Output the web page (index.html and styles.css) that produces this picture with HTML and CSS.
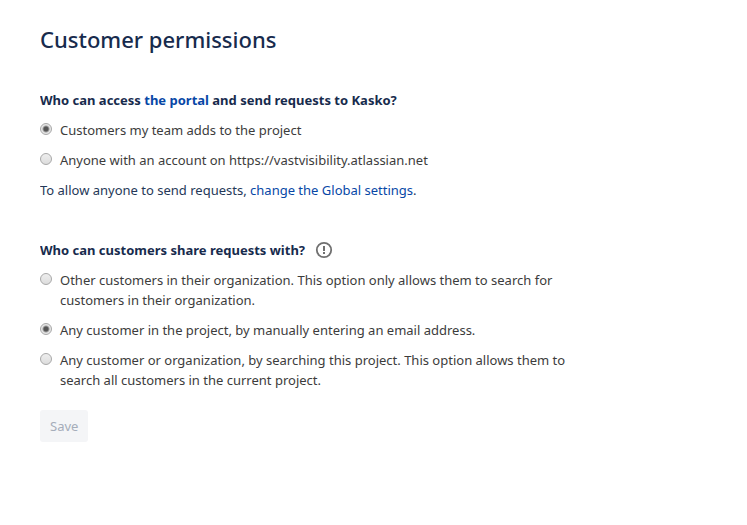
FILE: index.html
```html
<!DOCTYPE html>
<html lang="en">
<head>
    <meta charset="UTF-8">
    <meta name="viewport" content="width=device-width, initial-scale=1.0">
    <title>Customer permissions</title>
    <link rel="stylesheet" href="styles.css">
</head>
<body>

<h1>Customer permissions</h1>

<form>
    <fieldset>
        <legend>Who can access <a href="#">the portal</a> and send requests to Kasko?</legend>
        <div class="option">
            <input type="radio" name="access" id="access-team" checked>
            <label for="access-team">Customers my team adds to the project</label>
        </div>
        <div class="option">
            <input type="radio" name="access" id="access-anyone">
            <label for="access-anyone">Anyone with an account on https://vastvisibility.atlassian.net</label>
        </div>
        <p>To allow anyone to send requests, <a href="#">change the Global settings</a>.</p>
    </fieldset>

    <fieldset>
        <legend class="with-icon">
            Who can customers share requests with?
            <svg viewBox="0 0 18 18" width="18" height="18" aria-hidden="true">
                <circle cx="9" cy="9" r="7.2" fill="none" stroke="#707070" stroke-width="1.8"/>
                <rect x="8" y="5" width="2" height="5" fill="#707070"/>
                <rect x="8" y="11" width="2" height="2" fill="#707070"/>
            </svg>
        </legend>
        <div class="option">
            <input type="radio" name="share" id="share-org">
            <label for="share-org">Other customers in their organization. This option only allows them to search for customers in their organization.</label>
        </div>
        <div class="option">
            <input type="radio" name="share" id="share-email" checked>
            <label for="share-email">Any customer in the project, by manually entering an email address.</label>
        </div>
        <div class="option">
            <input type="radio" name="share" id="share-any">
            <label for="share-any">Any customer or organization, by searching this project. This option allows them to search all customers in the current project.</label>
        </div>
    </fieldset>

    <button type="button" disabled>Save</button>
</form>

</body>
</html>
```
FILE: styles.css
```css
body {
    font-family: "Noto Sans", "Open Sans", sans-serif;
    font-size: 13px;
    line-height: 20px;
    margin: 24px 40px;
    color: #3c3c3c;
    background-color: #fff;
}

h1 {
    margin: 0 0 36px;
    font-size: 22px;
    font-weight: 500;
    line-height: 30px;
    color: #172b4d;
}

form {
    max-width: 540px;
}

fieldset {
    margin: 0 0 40px;
    padding: 0;
    border: none;
}

fieldset:last-of-type {
    margin-bottom: 20px;
}

legend {
    padding: 0;
    font-weight: 700;
    color: #172b4d;
}

.with-icon {
    display: flex;
    align-items: center;
    gap: 10px;
}

a {
    color: #0747a6;
    text-decoration: none;
}

.option {
    display: flex;
    align-items: flex-start;
    gap: 8px;
    margin-top: 10px;
}

.option input {
    appearance: none;
    flex: none;
    width: 12px;
    height: 12px;
    margin: 3px 0 0;
    border: 1px solid #a8a8a8;
    border-radius: 50%;
    background: linear-gradient(#eee, #ddd);
}

.option input:checked {
    background: radial-gradient(circle, #555 2px, #e6e6e6 4px);
}

p {
    margin: 10px 0 0;
    color: #253858;
}

button {
    height: 32px;
    padding: 0 10px;
    border: none;
    border-radius: 3px;
    font: inherit;
    color: #a5adba;
    background-color: #f4f5f7;
}
```
